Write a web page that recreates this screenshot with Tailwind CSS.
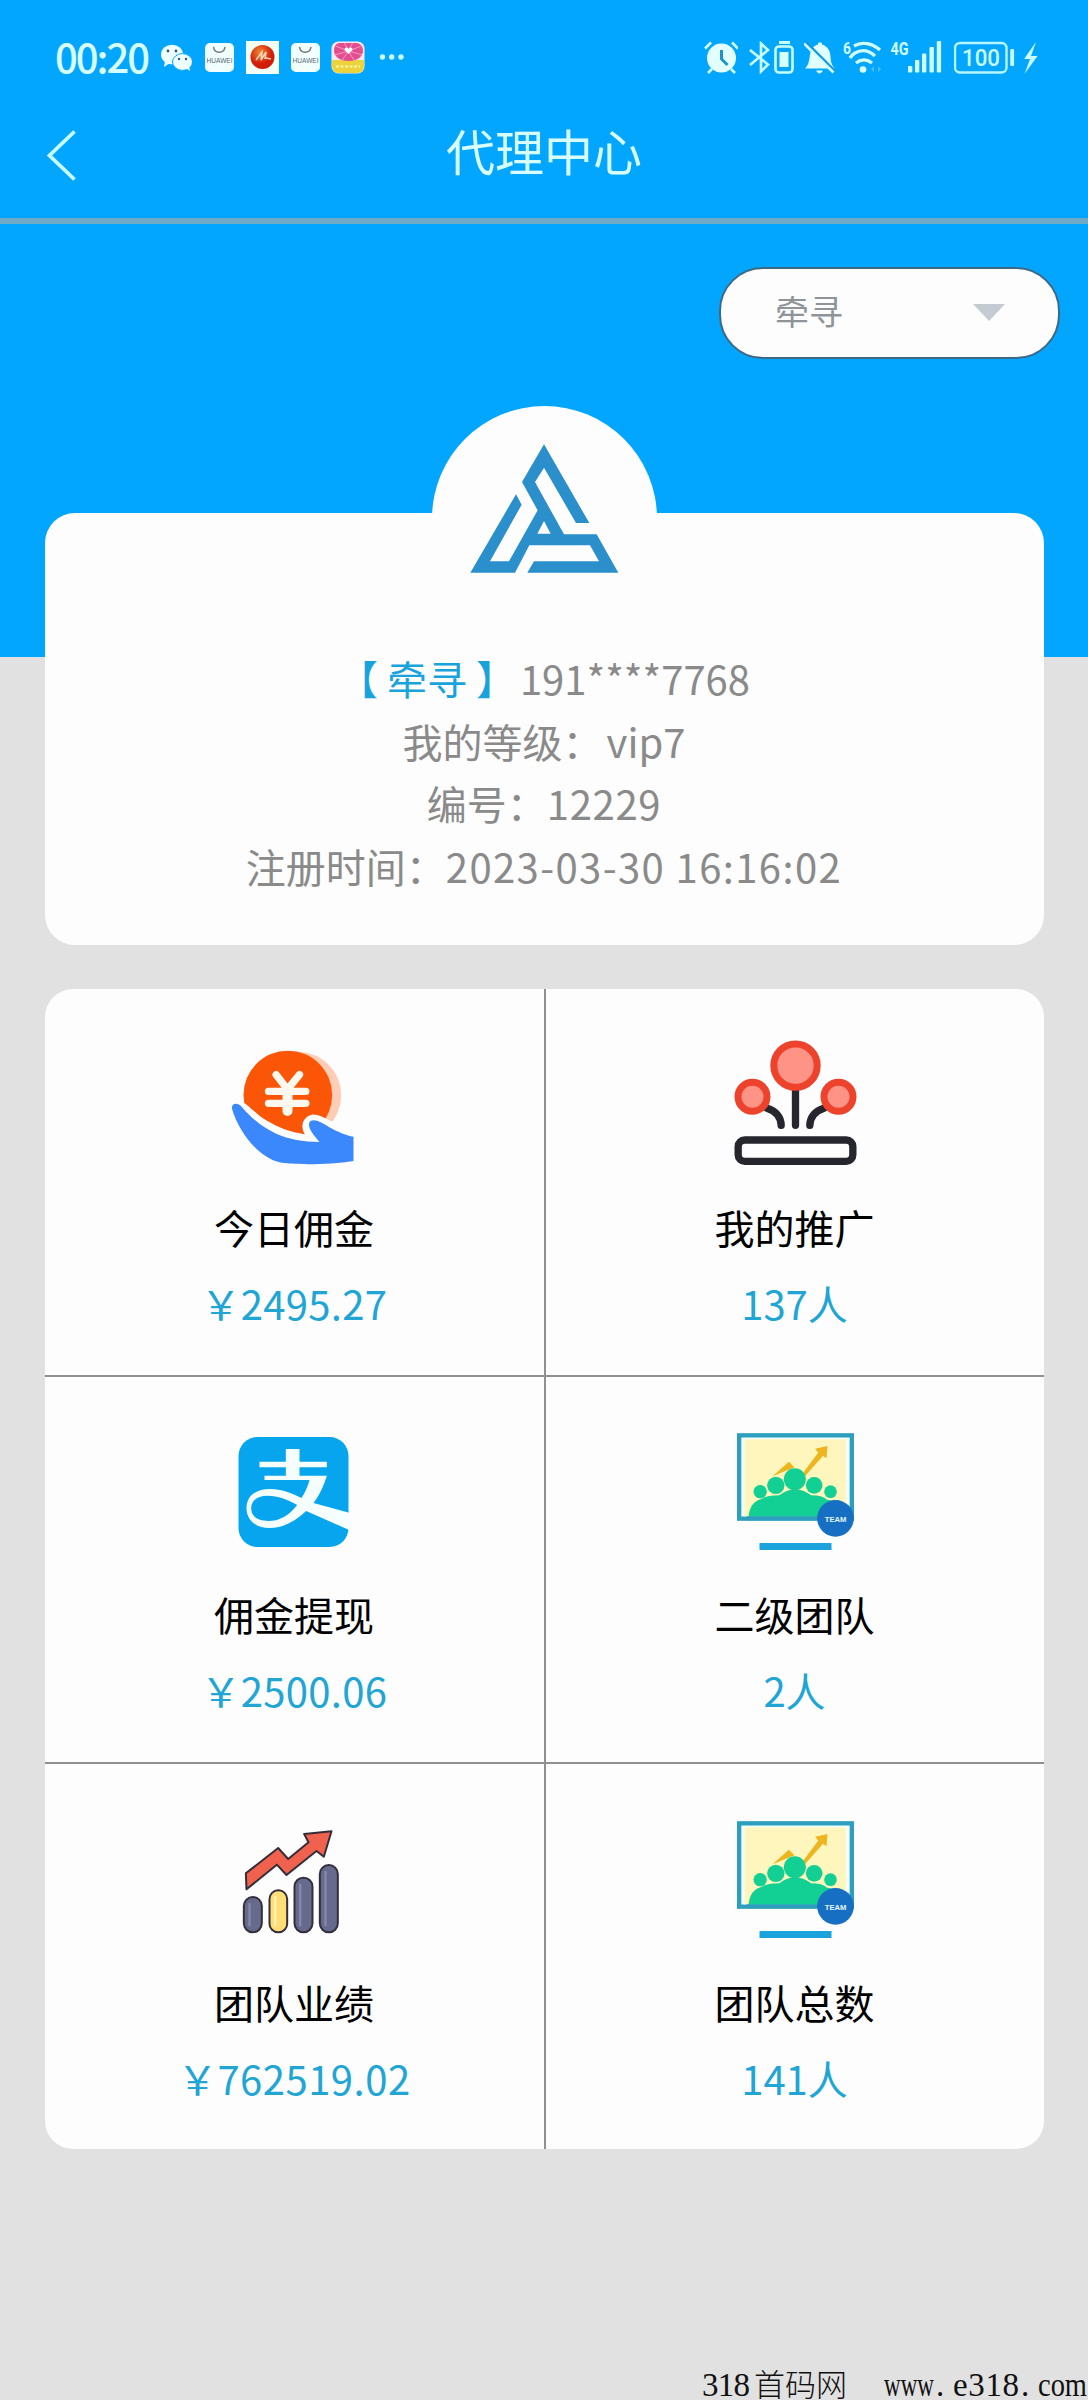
<!DOCTYPE html>
<html lang="zh-CN">
<head>
<meta charset="utf-8">
<title>代理中心</title>
<script src="https://cdn.jsdelivr.net/npm/@tailwindcss/browser@4"></script>
</head>
<body class="bg-[#e1e1e1]">
<div class="flex h-[2400px] w-[1088px] flex-col overflow-hidden bg-[linear-gradient(#02a6ff_657px,#e1e1e1_657px)] font-['Noto_Sans_CJK_SC',sans-serif]">

  <header class="h-[224px] shrink-0 border-b-[6px] border-[#6fabc6] text-[#d8ffff]">
    <!-- status bar -->
    <div class="flex h-[82px] items-end justify-between pr-[50px] pb-2 pl-[55px]">
      <div class="flex h-[33px] items-center">
        <span class="-mt-0.5 w-[94px] text-[40px] leading-[33px] font-medium tracking-[-2px] whitespace-nowrap">00:20</span>
        <svg class="ml-3 h-[33px] w-[31px]" viewBox="161 41 31 33">
          <ellipse cx="172" cy="54.500" rx="11" ry="9.800" fill="#eff"/><path d="M165 61l-1 6 6-4z" fill="#eff"/>
          <circle cx="168" cy="51" r="1.400" fill="#357"/><circle cx="176" cy="51" r="1.400" fill="#357"/>
          <ellipse cx="182.500" cy="62" rx="10" ry="8.400" fill="#eff" stroke="#02a6ff"/><path d="M186 68l4 3-1-5z" fill="#eff"/>
          <circle cx="179" cy="59" r="1.200" fill="#357"/><circle cx="186" cy="59" r="1.200" fill="#357"/>
        </svg>
        <svg class="ml-[13px] h-[33px] w-[29px]" viewBox="205 41 29 33">
          <rect x="205" y="43" width="29" height="29" rx="5" fill="#f2ffff"/><path d="M213.500 47c1 7 10.500 7 11.500 0" fill="none" stroke="#777" stroke-width="1.500"/>
          <text x="206.500" y="62.500" font-size="6.500" textLength="26" font-family="Liberation Sans" fill="#567">HUAWEI</text>
        </svg>
        <svg class="ml-3 h-[33px] w-[33px]" viewBox="246 41 33 33">
          <defs><radialGradient id="ball" cx=".4" cy=".3"><stop offset="0" stop-color="#f08a30"/><stop offset=".55" stop-color="#e2491c"/><stop offset="1" stop-color="#d01c08"/></radialGradient></defs>
          <rect x="246" y="41" width="33" height="33" fill="#f4fff4"/><circle cx="262.500" cy="57" r="12" fill="url(#ball)"/>
          <path d="M256 60l6-8-1 8 5-8-1 7M266 58l5 1" fill="none" stroke="#fbd9b8" stroke-width="1.600"/>
        </svg>
        <svg class="ml-3 h-[33px] w-[29px]" viewBox="205 41 29 33">
          <rect x="205" y="43" width="29" height="29" rx="5" fill="#f2ffff"/><path d="M213.500 47c1 7 10.500 7 11.500 0" fill="none" stroke="#777" stroke-width="1.500"/>
          <text x="206.500" y="62.500" font-size="6.500" textLength="26" font-family="Liberation Sans" fill="#567">HUAWEI</text>
        </svg>
        <svg class="ml-[11px] h-[33px] w-[34px]" viewBox="331 41 34 33">
          <rect x="331.500" y="41.500" width="33" height="32" rx="7" fill="#fbe7ee"/><path d="M332 60h32v6q0 7-7 7h-18q-7 0-7-7z" fill="#ecd33c"/>
          <path d="M339 43h18c5 1 6 5 6 8s-3 10-14 10-15-6-15-10 1-7 5-8z" fill="#e24f91"/>
          <path d="M348.500 51l-13-5M348.500 51l-14 4M348.500 51l-7 10M348.500 51l6 10M348.500 51l14 4M348.500 51l13-5M348.500 51l-4-8M348.500 51l4-8" stroke="#fac" stroke-width=".8"/>
          <path d="M348.500 54l-4-4c0-3 3-3 4-1 1-2 4-2 4 1z" fill="#fff"/><path d="M336 66.500h24" stroke="#fff2a0" stroke-width="2" stroke-dasharray="3 1.500"/>
        </svg>
        <svg class="ml-[14px] h-[33px] w-[26px]" viewBox="379 41 26 33" fill="#c8ffff"><circle cx="382.500" cy="57" r="2.700"/><circle cx="391.700" cy="57" r="2.700"/><circle cx="401" cy="57" r="2.700"/></svg>
      </div>
      <div class="flex h-[33px] items-center">
        <svg class="h-[33px] w-[34px]" viewBox="704 41 34 33" fill="none" stroke="#d8ffff" stroke-width="2.500">
          <circle cx="721.500" cy="58" r="14.500" fill="#e4ffff" stroke="none"/><path d="M705 48.500l6-6M738 48.500l-6-6M708 73l4-4M735 73l-4-4"/><path d="M721.500 50v9l6 6" stroke="#1b93cc" stroke-width="3"/>
        </svg>
        <svg class="ml-[11px] h-[33px] w-[46px]" viewBox="749 41 46 33" fill="none" stroke="#c8ffff" stroke-width="2.600">
          <path d="M750 50l18 14.500-7 7V43.500l7 6.500L750 65"/><rect x="775.500" y="46.500" width="17" height="26" rx="3.500"/><path d="M779 42.500h11" stroke-width="3"/><rect x="779.500" y="52" width="9" height="15" fill="#d8ffff" stroke="none"/>
        </svg>
        <svg class="ml-[9px] h-[33px] w-[31px]" viewBox="804 41 31 33">
          <path d="M805 68.500c4-4 4-8 5-14 1-6 4-9 8-10 0-3 4-3 4 0 6 2 8 6 8.500 12 .5 6 1 8 4 12z" fill="#e0ffff"/><path d="M816 70.500h7q-3.500 6-7 0z" fill="#e0ffff"/><path d="M806 42l29 29" stroke="#1799df" stroke-width="2.500"/><path d="M804 43.500l29.500 29" stroke="#d8ffff" stroke-width="2.500"/>
        </svg>
        <svg class="ml-2 h-[33px] w-[39px] overflow-visible" viewBox="843 41 39 33" fill="none" stroke="#d0ffff" stroke-width="3.300">
          <text x="843" y="53.500" font-size="17" font-weight="bold" stroke="none" fill="#d0ffff" font-family="Roboto" textLength="8" lengthAdjust="spacingAndGlyphs">6</text>
          <path d="M854 46c8-4.500 18-3 26 4M850 58c2-3 3-4 5-5 7-4 14-2.500 20 3M856 63c5-4 11-4 16 0"/><circle cx="863" cy="69.500" r="3.300" fill="#d8ffff" stroke="none"/><path d="M874 66l-3 3 3 3zM878 66l3 3-3 3z" fill="#48bfff" stroke="none"/>
        </svg>
        <svg class="ml-2 h-[33px] w-[52px] overflow-visible" viewBox="890 41 52 33" fill="#d0ffff">
          <text x="890.500" y="54.500" font-size="19" font-weight="bold" font-family="Roboto" textLength="18" lengthAdjust="spacingAndGlyphs">4G</text>
          <rect x="908" y="66" width="4.300" height="6.500" rx="1"/><rect x="915" y="60" width="4.300" height="12.500" rx="1"/><rect x="922" y="53.500" width="4.300" height="19" rx="1"/><rect x="929.500" y="47" width="4.300" height="25.500" rx="1"/><rect x="936.800" y="41" width="4.300" height="31.500" rx="1"/>
        </svg>
        <svg class="ml-3 h-[33px] w-[84px]" viewBox="954 41 84 33" fill="#c8ffff">
          <rect x="955" y="43" width="51.500" height="29.500" rx="5" fill="none" stroke="#b8f6ff" stroke-width="2.400"/><rect x="1010.300" y="49" width="3.800" height="17" rx="1"/>
          <text x="962" y="66" font-size="24" font-weight="500" font-family="Roboto" textLength="38" lengthAdjust="spacingAndGlyphs">100</text>
          <path d="M1036 42l-12 17h6l-5.500 15 13-18h-6.500z"/>
        </svg>
      </div>
    </div>
    <!-- title bar -->
    <div class="grid h-[136px] grid-cols-[200px_1fr_200px] pb-1">
      <svg class="mt-[47px] ml-[45px] h-[54px] w-[34px]" viewBox="45 129 34 54" fill="none" stroke="#c8ffff" stroke-width="3.800"><path d="M74.500 131.500L49.500 155.500 74.500 179.500"/></svg>
      <h1 class="mt-8 text-center text-[49px] leading-[72px] font-normal">代理中心</h1>
    </div>
  </header>

  <div class="mt-[43px] mr-7 flex h-[92px] w-[341px] shrink-0 items-center justify-between self-end rounded-[44px] border-2 border-[#3c6a86] bg-[#fdfdfd] pr-[53px] pl-[54px] text-[34px] leading-[50px] text-[#8f9498]">
    <span class="-mt-1">牵寻</span>
    <svg class="h-[18px] w-8" viewBox="0 0 32 18"><path d="M0 0h32L16 17z" fill="#c5cbd2"/></svg>
  </div>

  <!-- profile card -->
  <section class="relative mx-auto mt-[154px] h-[432px] w-[999px] shrink-0 rounded-[30px] bg-[#fdfdfd] pt-[134px] text-center text-[40px] leading-[62.600px] text-[#8a8a8a]">
    <div class="absolute top-[-107px] left-[387px] h-[225px] w-[225px] rounded-full bg-[#fdfdfd]">
      <svg class="absolute top-[37px] left-[37px] h-[133px] w-[150px]" viewBox="207 158 450 399"><path fill="#2a8fcb" fill-rule="evenodd" d="M432 162L568 398H528L432 232 405 275 492 432H590L655 547H382L402 513H597L570 465H388L345 547H211L348 312 365 343 270 513H327L413 360 366 275ZM432 392L412 430H452Z"/></svg>
    </div>
    <p class="whitespace-pre"><span class="mr-1 text-[#18a3dc]">【 牵寻 】</span>191****7768</p>
    <p>我的等级：<span class="ml-1">vip7</span></p>
    <p>编号：<span class="tracking-[.7px]">12229</span></p>
    <p>注册时间：<span class="tracking-[1.400px]">2023-03-30 16:16:02</span></p>
  </section>

  <!-- statistics -->
  <main class="mx-auto mt-11 grid h-[1160px] w-[999px] shrink-0 grid-cols-[501px_498px] grid-rows-[388px_387px_385px] overflow-hidden rounded-[28px] bg-[#fdfdfd] text-center text-[40px] leading-[60px] text-black">
    <div class="flex flex-col items-center border-r-2 border-b-2 border-[#909090] pt-[46px]">
      <svg class="h-[130px] w-[130px]" viewBox="118.500 45 390 390">
        <circle cx="324" cy="226" r="131" fill="#ffcdb5"/><circle cx="295" cy="225" r="133" fill="#fb5607"/>
        <g fill="none" stroke="#fff8ef" stroke-width="22" stroke-linecap="round"><path d="M260 164L294 208 330 164M237 214H349M237 250H349"/><path d="M294 210V273" stroke-width="30"/></g>
        <path d="M139 242C165 236 195 282 230 301 266 323 302 337 346 343 330 316 342 290 367 284 402 281 435 322 505 330V450H260C180 430 112 302 139 242Z" fill="#fdfdfd"/>
        <path d="M127 265C127 248 145 247 157 261 190 300 225 325 260 341 300 358 340 365 390 366 367 340 350 317 363 303 389 289 420 335 492 350V423C420 435 305 435 270 427 204 408 149 339 127 265Z" fill="#3b87fc"/>
      </svg>
      <p class="mt-8">今日佣金</p><p class="mt-4 text-[#20a5d4]">￥<span class="tracking-[.3px]">2495.27</span></p>
    </div>
    <div class="flex flex-col items-center border-b-2 border-[#909090] pt-[46px]">
      <svg class="h-[130px] w-[130px]" viewBox="148.500 45 390 390">
        <g fill="none" stroke="#25262e" stroke-width="22" stroke-linecap="round"><path d="M345 210V316M258 264Q301 278 302 316M432 264Q389 278 388 316"/><rect x="173" y="360" width="344" height="64" rx="20"/></g>
        <g fill="#ff9385" stroke="#ed432c" stroke-width="21"><circle cx="345" cy="137" r="65"/><circle cx="216" cy="230" r="43.500"/><circle cx="474" cy="230" r="43.500"/></g>
      </svg>
      <p class="mt-8">我的推广</p><p class="mt-4 text-[#20a5d4]">137人</p>
    </div>
    <div class="flex flex-col items-center border-r-2 border-b-2 border-[#909090] pt-[45px]">
      <svg class="h-[130px] w-[130px]" viewBox="118.500 66 390 390">
        <rect x="147" y="111" width="330" height="330" rx="57" fill="#08a5ef"/>
        <path d="M289 147h41v38h82v17h-82v25h82C402 260 389 286 372 309L479 338V390L350 333C316 365 280 384 240 384 196 384 171 358 171 324 171 290 197 267 242 267 277 267 306 279 336 294 348 276 355 259 360 240H225V227H289V202H210V185H289ZM323 315C294 298 266 287 234 287 205 287 185 301 185 325 185 350 206 363 237 363 272 363 300 345 323 315Z" fill="#f5ffff" fill-rule="evenodd"/>
      </svg>
      <p class="mt-8">佣金提现</p><p class="mt-4 text-[#20a5d4]">￥<span class="tracking-[.3px]">2500.06</span></p>
    </div>
    <div class="flex flex-col items-center border-b-2 border-[#909090] pt-[45px]">
      <svg class="h-[130px] w-[130px]" viewBox="148.500 66 390 390">
        <g id="team">
          <rect x="176" y="106" width="338" height="250" fill="#f3fffb" stroke="#2d9fbe" stroke-width="13"/><rect x="192" y="118" width="304" height="231" fill="#fff6bd"/>
          <path d="M276 229L325 185 342 202ZM368 218L413 158 404 146 441 138 438 174 427 168 374 228Z" fill="#edb51f"/>
          <g fill="#12cf94"><path d="M204 350Q208 305 244 296 262 286 296 286 344 250 392 286 425 286 440 299 470 300 482 350Z"/><circle cx="239" cy="275" r="20"/><circle cx="450" cy="275" r="19"/><circle cx="286" cy="256" r="26"/><circle cx="401" cy="256" r="25"/><circle cx="343" cy="238" r="33"/></g>
          <path d="M198 355H420" stroke="#2d9fbe" stroke-width="12"/><circle cx="465" cy="355" r="55" fill="#176fc4"/>
          <text x="433" y="366" font-size="23" font-weight="bold" font-family="Liberation Sans" fill="#e4f6ff" textLength="65" lengthAdjust="spacingAndGlyphs">TEAM</text>
          <rect x="237" y="429" width="216" height="21" fill="#1ba3db"/>
        </g>
      </svg>
      <p class="mt-8">二级团队</p><p class="mt-4 text-[#20a5d4]">2人</p>
    </div>
    <div class="flex flex-col items-center border-r-2 border-[#909090] pt-[45px]">
      <svg class="h-[130px] w-[130px]" viewBox="178.500 27 390 390" stroke="#342e3b" stroke-width="6" stroke-linejoin="round">
        <path d="M229 220L326 144 356 177 417 127 404 102 486 94 463 170 441 153 351 225 322 194 231 268Z" fill="#f0624e"/>
        <g fill="#666b8e"><rect x="223" y="291" width="54" height="106" rx="27"/><rect x="300" y="271" width="53" height="126" rx="26" fill="#ffdf75"/><rect x="375" y="233" width="54" height="164" rx="27"/><rect x="451" y="195" width="54" height="202" rx="27"/></g>
        <g stroke="#8589a8" stroke-width="7"><path d="M240 309V379M392 251V379M468 213V379"/><path d="M317 288V379" stroke="#fff0b8"/></g>
      </svg>
      <p class="mt-[33px]">团队业绩</p><p class="mt-4 text-[#20a5d4]">￥<span class="tracking-[.5px]">762519.02</span></p>
    </div>
    <div class="flex flex-col items-center pt-[46px]">
      <svg class="h-[130px] w-[130px]" viewBox="148.500 66 390 390"><use href="#team"/></svg>
      <p class="mt-8">团队总数</p><p class="mt-4 text-[#20a5d4]">141人</p>
    </div>
  </main>

  <footer class="mt-auto self-end">
    <svg class="block h-9 w-[388px] overflow-visible" viewBox="700 2364 388 36" font-family="Liberation Serif" font-size="33" fill="#111">
      <text x="702" y="2396" textLength="48">318</text>
      <text x="754" y="2396" font-size="31" font-family="Noto Sans CJK SC" font-weight="300" textLength="93">首码网</text>
      <text x="884" y="2396" textLength="50" lengthAdjust="spacingAndGlyphs">www</text>
      <text x="936" y="2396">.</text>
      <text x="953" y="2396" textLength="66">e318</text>
      <text x="1021" y="2396">.</text>
      <text x="1038" y="2396" textLength="49" lengthAdjust="spacingAndGlyphs">com</text>
    </svg>
  </footer>
</div>
</body>
</html>
